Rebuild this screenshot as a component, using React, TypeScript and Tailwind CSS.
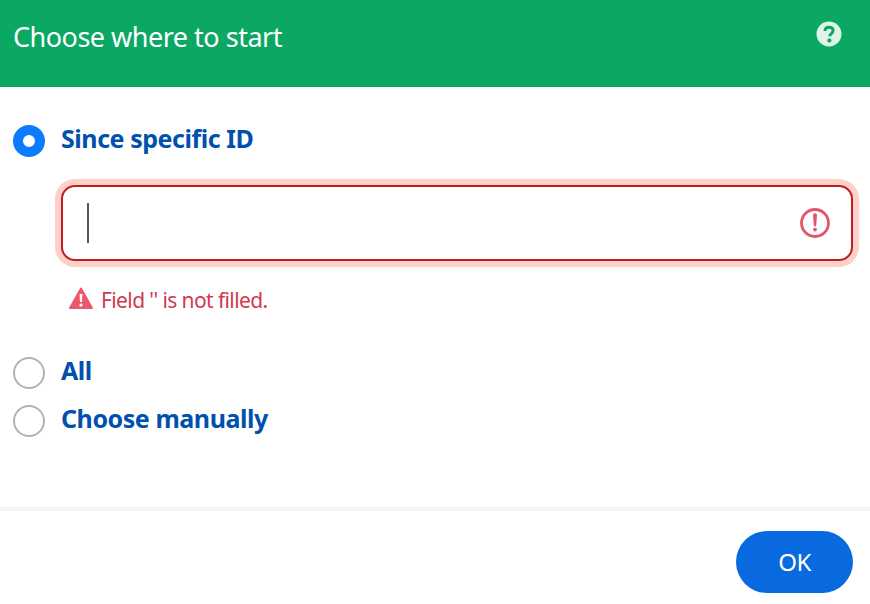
export default function App() {
  const font = { fontFamily: '"Noto Sans", sans-serif' };
  return (
    <div className="w-[870px] h-[604px] bg-white flex flex-col overflow-hidden" style={font}>
      <header className="h-[87px] bg-[#0aa863] flex justify-between pl-[13px] pr-[28px] shrink-0">
        <h1 className="text-[27px] leading-[37px] mt-[18px] text-white tracking-[-0.5px]">Choose where to start</h1>
        <svg className="mt-[21px]" width="26" height="26" viewBox="0 0 26 26">
          <circle cx="13" cy="13" r="12.5" fill="#dff3e9" />
          <path d="M9 10c0-2.4 1.8-3.8 4.1-3.8 2.4 0 4 1.4 4 3.4 0 3-3.3 3-3.3 5.6" fill="none" stroke="#0aa863" strokeWidth="3" />
          <circle cx="13.4" cy="19.6" r="2.1" fill="#0aa863" />
        </svg>
      </header>
      <main className="flex-1 flex flex-col pl-[13px] pt-[38px]">
        <div className="flex items-center gap-4 h-8">
          <span className="w-8 h-8 rounded-full border-[10px] border-[#0a7cff] bg-white shrink-0" />
          <span className="text-[25px] leading-8 font-bold text-[#0051ae] tracking-[-0.45px] -mt-[7px]">Since specific ID</span>
        </div>
        <div className="ml-[48px] mt-[28px] w-[792px] h-[76px] rounded-[14px] border-2 border-[#bd1f1f] shadow-[0_0_0_6px_#ffcfc9] flex items-center justify-between pl-[24px] pr-[21px] bg-white">
          <span className="w-[2px] h-[40px] bg-[#555555]" />
          <svg width="30" height="30" viewBox="0 0 30 30">
            <circle cx="15" cy="15" r="13.5" fill="none" stroke="#e2566b" strokeWidth="2.8" />
            <path d="M13 7.2a2 2 0 0 1 4 0l-.8 10a1.2 1.2 0 0 1-2.4 0z" fill="#e2566b" />
            <circle cx="15" cy="21.6" r="1.9" fill="#e2566b" />
          </svg>
        </div>
        <div className="ml-[56px] mt-[25px] flex items-center gap-[8px] h-7">
          <svg className="-mt-[4px]" width="24" height="22" viewBox="0 0 24 22">
            <path d="M12 1.5 L23 21 L1 21 Z" fill="#ea5a6e" stroke="#ea5a6e" strokeWidth="2" strokeLinejoin="round" />
            <path d="M10.6 7h2.8l-.4 8h-2z" fill="#fff" />
            <circle cx="12" cy="18" r="1.6" fill="#fff" />
          </svg>
          <span className="text-[21px] leading-7 text-[#d03a50] tracking-[-0.6px]">Field '' is not filled.</span>
        </div>
        <div className="flex items-center gap-4 h-8 mt-[43px]">
          <span className="w-8 h-8 rounded-full border-2 border-[#b3b3b3] bg-white shrink-0" />
          <span className="text-[25px] leading-8 font-bold text-[#0051ae] tracking-[-0.45px] -mt-[7px]">All</span>
        </div>
        <div className="flex items-center gap-4 h-8 mt-4">
          <span className="w-8 h-8 rounded-full border-2 border-[#b3b3b3] bg-white shrink-0" />
          <span className="text-[25px] leading-8 font-bold text-[#0051ae] tracking-[-0.45px] -mt-[7px]">Choose manually</span>
        </div>
      </main>
      <footer className="h-[97px] border-t-4 border-[#f3f3f3] flex justify-end items-start pt-[20px] pr-[17px] shrink-0">
        <button className="w-[117px] h-[62px] rounded-full bg-[#096ae0] text-white text-[24px] tracking-[-0.5px]">OK</button>
      </footer>
    </div>
  );
}
